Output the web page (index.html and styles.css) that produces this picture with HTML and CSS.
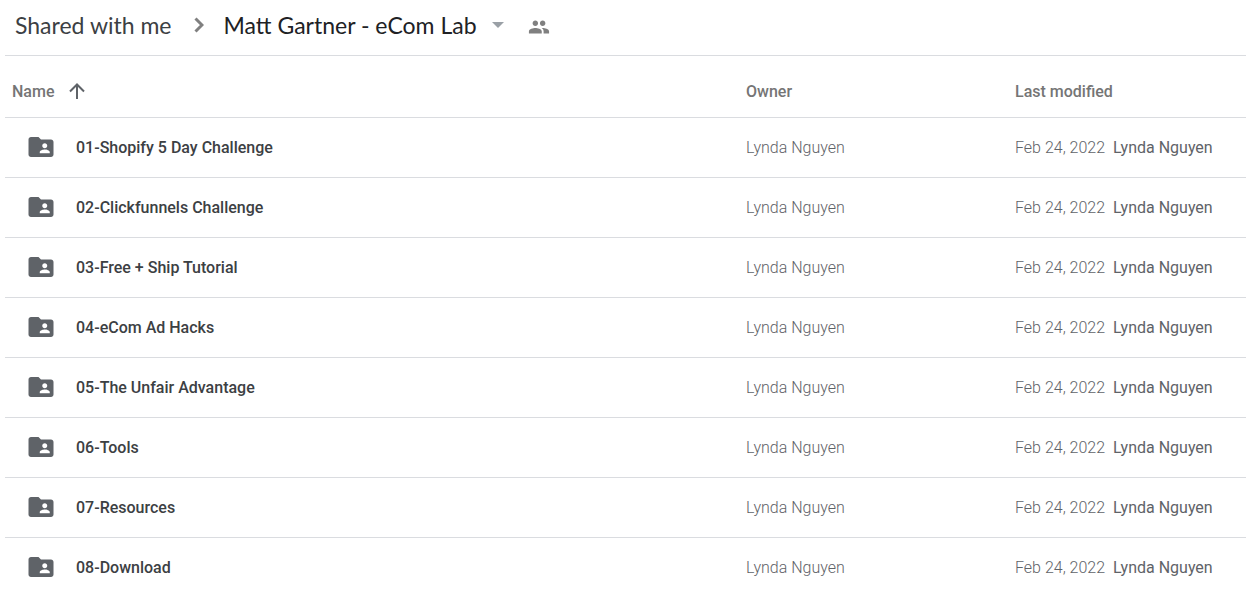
FILE: index.html
```
<!DOCTYPE html>
<html lang="en">

<head>
 <meta charset="UTF-8">
 <meta name="viewport" content="width=device-width, initial-scale=1.0">
 <title>Matt Gartner - eCom Lab</title>

 <link rel="stylesheet" href="styles.css">
</head>

<body>

 <svg class="sprite" aria-hidden="true">
  <symbol id="folder" viewBox="0 0 24 24">
   <path d="M20 6h-8l-2-2H4c-1.100 0-1.990.9-1.990 2L2 18c0 1.100.9 2 2 2h16c1.100 0 2-.9 2-2V8c0-1.100-.9-2-2-2zm-5 3c1.100 0 2 .9 2 2s-.9 2-2 2-2-.9-2-2 .9-2 2-2zm4 8h-8v-1c0-1.330 2.670-2 4-2s4 .67 4 2v1z"/>
  </symbol>
 </svg>

 <header class="header">
  <nav class="breadcrumb" aria-label="Breadcrumb">
   <a class="crumb" href="#">Shared with me</a>
   <svg class="chevron" viewBox="0 0 10 16" aria-hidden="true"><path d="M1.500 1.500L8 8l-6.500 6.500"/></svg>
   <button class="crumb current" type="button">Matt Gartner - eCom Lab
    <svg class="caret" viewBox="0 0 12 6" aria-hidden="true"><path d="M0 0h12L6 6z"/></svg>
   </button>
   <button class="people" type="button" aria-label="Manage people">
    <svg viewBox="0 0 24 24" aria-hidden="true"><path d="M16 11c1.660 0 2.990-1.340 2.990-3S17.660 5 16 5s-3 1.340-3 3 1.340 3 3 3zm-8 0c1.660 0 2.990-1.340 2.990-3S9.660 5 8 5 5 6.340 5 8s1.340 3 3 3zm0 2c-2.330 0-7 1.170-7 3.500V19h14v-2.500c0-2.330-4.670-3.500-7-3.500zm8 0c-.29 0-.62.02-.97.05 1.160.84 1.970 1.970 1.970 3.450V19h6v-2.500c0-2.330-4.670-3.500-7-3.500z"/></svg>
   </button>
  </nav>
 </header>

 <main>
  <table class="files">
   <thead>
    <tr>
     <th class="name" scope="col">
      <button class="sort" type="button">Name
       <svg viewBox="0 0 16 16" aria-hidden="true"><path d="M8 16V1.500M1 8.500l7-7 7 7"/></svg>
      </button>
     </th>
     <th class="owner" scope="col">Owner</th>
     <th class="modified" scope="col">Last modified</th>
    </tr>
   </thead>
   <tbody>
    <tr>
     <td><a class="file" href="#"><svg class="folder" aria-hidden="true"><use href="#folder"/></svg>01-Shopify 5 Day Challenge</a></td>
     <td>Lynda Nguyen</td>
     <td>Feb 24, 2022 <span class="by">Lynda Nguyen</span></td>
    </tr>
    <tr>
     <td><a class="file" href="#"><svg class="folder" aria-hidden="true"><use href="#folder"/></svg>02-Clickfunnels Challenge</a></td>
     <td>Lynda Nguyen</td>
     <td>Feb 24, 2022 <span class="by">Lynda Nguyen</span></td>
    </tr>
    <tr>
     <td><a class="file" href="#"><svg class="folder" aria-hidden="true"><use href="#folder"/></svg>03-Free + Ship Tutorial</a></td>
     <td>Lynda Nguyen</td>
     <td>Feb 24, 2022 <span class="by">Lynda Nguyen</span></td>
    </tr>
    <tr>
     <td><a class="file" href="#"><svg class="folder" aria-hidden="true"><use href="#folder"/></svg>04-eCom Ad Hacks</a></td>
     <td>Lynda Nguyen</td>
     <td>Feb 24, 2022 <span class="by">Lynda Nguyen</span></td>
    </tr>
    <tr>
     <td><a class="file" href="#"><svg class="folder" aria-hidden="true"><use href="#folder"/></svg>05-The Unfair Advantage</a></td>
     <td>Lynda Nguyen</td>
     <td>Feb 24, 2022 <span class="by">Lynda Nguyen</span></td>
    </tr>
    <tr>
     <td><a class="file" href="#"><svg class="folder" aria-hidden="true"><use href="#folder"/></svg>06-Tools</a></td>
     <td>Lynda Nguyen</td>
     <td>Feb 24, 2022 <span class="by">Lynda Nguyen</span></td>
    </tr>
    <tr>
     <td><a class="file" href="#"><svg class="folder" aria-hidden="true"><use href="#folder"/></svg>07-Resources</a></td>
     <td>Lynda Nguyen</td>
     <td>Feb 24, 2022 <span class="by">Lynda Nguyen</span></td>
    </tr>
    <tr>
     <td><a class="file" href="#"><svg class="folder" aria-hidden="true"><use href="#folder"/></svg>08-Download</a></td>
     <td>Lynda Nguyen</td>
     <td>Feb 24, 2022 <span class="by">Lynda Nguyen</span></td>
    </tr>
   </tbody>
  </table>
 </main>

</body>

</html>
```
FILE: styles.css
```
:root {
 --main-font: Roboto, "Liberation Sans", sans-serif;
 --title-font: Lato, Roboto, sans-serif;
 --line-color: #dadce0;
 --text-color: #3c4043;
 --icon-color: #5f6368;
 --muted-color: #757575;
}

html {
 box-sizing: border-box;
 font-family: var(--main-font);
 font-size: 16px;
}

*,
*::before,
*::after {
 box-sizing: inherit;
}

body {
 margin: 0;
 padding-left: 5px;
 background-color: #fff;
 color: var(--text-color);
}

a {
 color: inherit;
 text-decoration: none;
}

button {
 padding: 0;
 border: 0;
 background: none;
 color: inherit;
 font: inherit;
 cursor: pointer;
}

svg {
 display: block;
 flex: none;
}

.sprite {
 display: none;
}

/* - - - Breadcrumb - - - */
.header {
 border-bottom: 1px solid var(--line-color);
}

.breadcrumb {
 display: flex;
 align-items: center;
 height: 55px;
 padding: 0 10px 6px;
 white-space: nowrap;
}

.crumb {
 font-family: var(--title-font);
 font-size: 23px;
 line-height: 28px;
}

.current {
 display: flex;
 align-items: center;
 gap: 15px;
 color: #202124;
}

.chevron {
 width: 10px;
 height: 16px;
 margin: 0 20px 0 22px;
 fill: none;
 stroke: #808080;
 stroke-width: 3;
}

.caret {
 width: 12px;
 height: 6px;
 fill: #9aa0a6;
}

.people {
 margin-left: 24px;
 padding-top: 4px;
}

.people svg {
 width: 22px;
 height: 22px;
 fill: #808080;
}

/* - - - File list - - - */
.files {
 width: 100%;
 border-collapse: collapse;
 table-layout: fixed;
 text-align: left;
}

.files th,
.files td {
 height: 60px;
 padding: 0;
 border-bottom: 1px solid var(--line-color);
 white-space: nowrap;
}

.files th {
 height: 61px;
 padding-top: 10px;
 color: var(--muted-color);
 font-weight: 500;
}

.files td {
 color: var(--icon-color);
 font-weight: 300;
}

.files tbody tr:last-child td {
 border-bottom: 0;
}

.files .name {
 padding-left: 7px;
}

.owner {
 width: 269px;
}

.modified {
 width: 231px;
}

.sort {
 display: flex;
 align-items: center;
 gap: 15px;
}

.sort svg {
 width: 16px;
 height: 16px;
 fill: none;
 stroke: var(--icon-color);
 stroke-width: 2;
}

.file {
 display: flex;
 align-items: center;
 gap: 20px;
 padding-left: 21px;
 color: var(--text-color);
 font-weight: 500;
}

.folder {
 width: 30px;
 height: 30px;
 fill: var(--icon-color);
}

.by {
 margin-left: 4px;
 font-weight: 400;
}
```
